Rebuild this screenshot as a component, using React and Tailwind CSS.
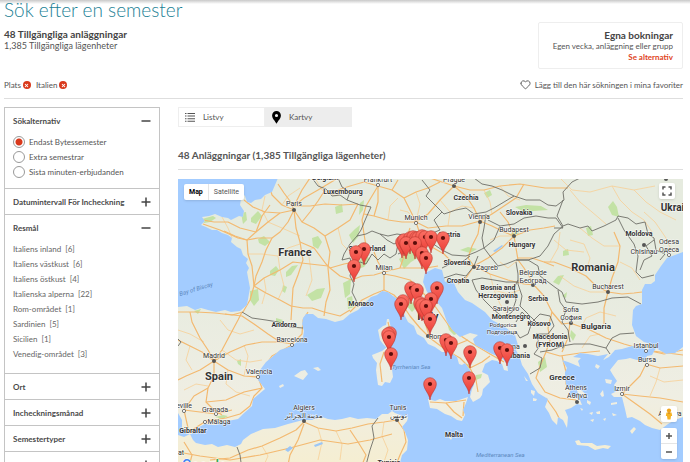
import React, { useState } from "react";
import { Heart, X } from "lucide-react";

const regions = [
  { name: "Italiens inland", count: 6 },
  { name: "Italiens västkust", count: 6 },
  { name: "Italiens östkust", count: 4 },
  { name: "Italienska alperna", count: 22 },
  { name: "Rom-området", count: 1 },
  { name: "Sardinien", count: 5 },
  { name: "Sicilien", count: 1 },
  { name: "Venedig-området", count: 3 },
];

const searchOptions = [
  "Endast Bytessemester",
  "Extra semestrar",
  "Sista minuten-erbjudanden",
];

const land = [
  // Europe
  "278,178 275,185 272,192 265,195 261,199 255,200 251,203 247,202 245,196 241,192 238,193 241,199 240,205 244,211 243,217 239,216 235,218 231,220 228,218 222,217 215,214 209,216 202,217 205,221 201,225 206,227 212,230 217,230 222,233 228,235 232,238 231,242 237,247 241,249 243,255 248,259 246,263 249,268 247,272 250,288 247,305 240,311 231,312 225,310 216,312 208,310 201,308 195,310 187,306 178,307 178,413 182,420 182,428 187,434 192,434 195,429 205,424 215,425 228,421 238,419 243,414 252,406 253,399 259,394 265,389 258,380 260,370 266,362 272,357 280,350 292,346 303,337 304,331 302,324 303,318 306,314 313,314 318,318 326,319 335,322 343,320 350,314 358,310 365,303 371,297 377,295 382,291 388,292 393,296 399,300 402,308 405,316 408,322 414,326 417,334 424,338 428,344 435,347 442,352 450,352 457,357 459,364 462,365 465,363 470,370 473,380 474,385 472,389 470,397 473,402 480,398 482,395 483,389 490,382 488,375 482,372 485,364 492,360 497,361 502,364 504,370 508,371 507,364 502,358 492,354 475,345 473,339 478,335 470,333 460,337 452,330 447,322 442,308 435,300 427,292 423,282 425,273 435,268 442,270 445,282 452,279 458,292 465,300 472,303 485,312 492,320 505,327 515,335 518,345 516,350 520,358 522,365 528,374 532,384 538,393 548,399 545,407 549,413 552,420 557,425 558,417 563,420 567,428 568,417 565,410 571,408 577,404 582,405 580,400 575,397 569,394 571,389 567,389 565,379 565,372 567,368 562,360 568,362 573,364 580,367 578,361 581,358 573,357 580,353 588,354 598,356 608,354 603,360 609,357 615,350 622,349 632,346 640,347 648,350 651,344 644,342 636,336 632,325 633,310 636,306 642,304 642,290 645,284 651,284 655,281 655,275 661,266 667,258 675,255 683,252 700,250 700,170 278,170",
  // Anatolia
  "656,348 666,354 675,353 683,347 700,345 700,416 683,417 675,420 668,424 660,430 652,428 645,425 640,421 632,417 627,418 625,409 622,397 614,397 611,394 619,390 614,385 617,381 613,375 610,370 618,360 626,359 630,358 637,360 645,360 647,356 652,355",
  // Africa
  "178,435 184,437 190,434 193,440 196,443 205,445 212,444 218,447 227,445 235,447 241,444 243,440 251,434 263,429 275,428 288,424 303,420 312,420 322,417 328,419 335,420 342,419 350,417 358,419 367,418 376,419 382,414 388,414 392,411 395,413 400,415 400,418 404,416 408,417 407,421 402,427 405,432 408,440 407,450 402,455 398,470 178,470",
  // Sardinia, Corsica, Sicily, Crete
  "382,351 387,347 390,349 394,354 394,362 392,369 393,377 390,383 385,382 382,386 378,385 377,378 376,370 377,363 373,358 372,355",
  "378,330 383,326 386,325 387,319 389,319 390,324 392,331 392,340 388,349 383,344 380,340",
  "428,399 435,401 440,399 445,401 456,401 468,397 466,403 463,410 465,415 462,421 457,420 451,416 445,414 437,409 430,408",
  "575,441 579,440 581,443 592,443 597,446 605,445 611,446 608,449 603,448 595,450 588,446 577,445",
  // smaller islands
  "294,376 301,371 305,370 308,374 303,380",
  "313,368 318,367 321,370 318,371",
  "279,386 283,384 284,386 280,388",
  "630,431 634,427 636,429 632,434",
  "448,436 452,438 451,440",
  "605,379 612,380 611,384 606,383",
  "600,394 603,390 604,396 602,397",
  "576,388 581,390 588,396 586,398 578,393",
  "531,390 535,391 534,396 531,393",
  "533,398 537,399 536,401 533,401",
  "524,376 528,381 526,381",
  "587,400 591,402 590,405 587,403",
  "596,412 600,411 600,414 597,414",
  "589,413 593,412 592,415",
  "580,408 583,409 582,411",
  "603,419 606,418 605,421",
  "611,403 617,402 617,404 611,405",
  "612,413 617,415 613,416",
  "590,420 594,419 593,422",
  "596,364 600,366 598,369 595,367",
];

const forests = [
  "202,219 213,216 216,218 210,222 204,223",
  "241,213 246,212 247,220 243,224",
  "251,218 258,211 262,216 256,224 251,222",
  "258,239 264,236 270,242 265,246 259,243",
  "270,271 276,266 279,270 275,276 270,275",
  "286,272 292,266 298,265 291,275 286,277",
  "312,238 318,236 322,242 318,249 313,246",
  "335,207 342,204 343,212 336,214",
  "250,291 258,289 259,300 254,306 250,300",
  "307,295 317,289 325,288 321,298 312,301",
  "343,283 351,279 350,294 345,298",
  "347,298 352,296 354,307 348,309",
  "283,285 287,287 285,293 282,291",
  "349,235 355,229 360,225 358,237 353,243",
  "360,203 364,200 363,210 359,215",
  "399,259 409,251 421,248 423,255 411,262 404,269",
  "358,262 365,255 370,259 364,267 358,269",
  "460,250 468,247 477,249 470,253",
  "608,207 613,201 617,207 619,217 612,215",
  "515,207 526,205 541,206 548,210 534,211 524,212",
  "586,228 591,226 593,235 588,236",
  "563,251 568,249 569,255 563,256",
  "553,282 558,276 564,275 559,285",
  "562,296 567,292 566,298",
  "538,362 545,357 547,367 540,372",
  "447,323 453,329 459,333 454,335 449,330",
  "462,365 470,364 471,370 465,371",
  "405,304 411,301 417,307 412,312",
  "237,361 241,359 241,366 238,364",
  "215,417 223,415 228,416 223,419",
  "194,311 201,309 198,314",
  "276,318 283,320 281,324 276,322",
  "484,193 490,190 492,195 487,198",
  "510,235 515,229 519,233 514,239",
  "571,330 576,335 573,341 570,336",
  "476,375 482,374 481,378 476,380",
];

const roads = [
  // France
  "278,184 284,193 290,201 294,210 302,222 314,228 325,236 330,252 328,268 330,290 326,302 324,316",
  "294,210 282,205 272,195 270,188",
  "294,210 280,213 265,212 253,207 244,200",
  "280,213 268,222 256,232 247,240 235,236 224,231",
  "203,220 214,222 228,222 240,228 256,232",
  "203,224 220,230 238,238 247,240",
  "294,210 288,222 280,232 272,238 258,238 247,240",
  "272,238 266,250 262,262 256,276 254,286",
  "294,210 296,228 300,242 303,260 298,275 293,288 292,304 291,320",
  "300,242 314,248 326,264 330,268 344,264 354,262",
  "254,286 264,278 280,270 293,262 310,264 328,266",
  "254,286 266,293 280,300 291,306 303,308 312,308 324,312 340,316 350,310",
  "254,286 250,300 243,312 232,315 215,313 196,312 178,312",
  "294,206 304,198 318,190 328,184 338,178",
  "294,206 310,206 325,204 342,205 358,204",
  "294,206 302,190 310,178",
  "247,240 248,254 252,266 254,286",
  "256,232 262,216 270,205",
  "302,222 310,212 318,201 325,190",
  "325,236 338,228 350,220 358,204",
  "330,268 340,276 352,280 362,276",
  // Spain
  "214,361 208,350 200,338 192,322 190,312",
  "214,361 222,350 230,335 238,320 242,312",
  "214,361 230,352 246,345 262,342 280,342 292,344",
  "280,342 268,334 254,324 242,316 225,314",
  "292,344 302,334 303,320 308,312",
  "214,361 228,370 244,376 258,377 262,370 272,356 290,346",
  "258,377 262,388 254,396 250,406 240,414 226,418 206,421 192,430",
  "214,361 214,376 208,388 206,402 214,410 222,415",
  "208,388 194,396 184,410 188,428",
  "214,361 200,370 186,376 178,380",
  "214,361 202,352 190,346 178,340",
  "206,402 226,400 244,392 262,388",
  "184,410 200,412 216,414 232,410",
  // Africa
  "184,442 192,455 188,470",
  "210,460 230,458 248,450 262,446 280,438 296,430 304,422 318,428 336,431 352,428 368,424 384,422 397,420",
  "178,452 200,456 230,460 260,455 290,448 320,440 348,444 370,440 392,434",
  "397,420 404,430 406,442 400,455 396,465",
  "350,430 358,442 366,455 362,465",
  "304,424 298,440 290,455 288,465",
  // Italy
  "350,312 362,300 374,294 384,290 394,295 402,304 410,316 420,328 430,338 446,350 460,358 470,368 476,380 478,392",
  "384,290 384,274 395,276 410,280 420,290 432,302 442,316 452,330 470,342 490,354 504,362",
  "362,276 374,275 384,272 400,268 414,268 426,268 438,266",
  "418,288 416,300 422,312 426,326 430,338",
  "402,304 412,296 420,290",
  "446,350 458,344 468,340",
  "470,368 482,362 490,356",
  "384,272 378,262 374,252",
  "400,268 404,256 406,240 410,228",
  "430,402 446,403 466,400",
  "464,402 463,416",
  "446,403 454,412 462,418",
  "384,352 380,364 382,382",
  "388,322 391,335 390,346",
  // Central Europe
  "378,186 372,196 366,206 362,220 364,234 366,246",
  "378,186 392,190 404,198 410,210 416,222",
  "378,186 364,182 350,186 338,190",
  "416,222 402,222 388,220 374,216 364,214",
  "416,222 428,214 440,200 454,186",
  "416,222 428,228 446,226 462,226 480,221",
  "416,222 420,234 430,246 444,254 452,262 474,266",
  "404,198 416,192 428,188 440,182",
  "454,186 466,196 474,208 480,221",
  "454,186 442,182 430,178",
  "454,186 460,178",
  "454,186 470,190 484,190 500,186 520,184 545,188 568,188",
  "480,221 492,214 504,206 516,198 524,184",
  "480,221 492,226 504,232 514,236",
  "480,221 478,234 472,246 468,258 474,266",
  "374,216 378,202 378,186",
  "392,190 398,180",
  "514,236 530,230 544,228 555,226",
  "514,236 516,248 518,260 524,268 530,278 534,285",
  "514,236 502,248 488,258 474,266",
  "514,236 508,222 500,212",
  "518,258 532,258 544,262 554,266",
  "474,266 490,274 508,280 524,284 534,285",
  "474,266 466,278 458,284",
  "534,285 544,296 552,312 562,324 570,323",
  "552,312 548,328 550,340 546,352 560,356 580,353 600,351",
  "570,323 590,330 606,338 624,344 645,350 660,352 683,355",
  "546,352 540,366 536,378 545,392 560,398 576,400",
  "546,398 556,412 560,420",
  "562,356 566,372 566,384 574,396",
  "570,323 568,338 562,352",
  "608,292 622,294 634,293 642,292",
  "608,292 596,286 586,276 570,268 554,262 544,262",
  "608,292 612,278 618,262 620,246 614,232",
  "608,292 604,308 604,324",
  "646,350 664,354 683,350",
  "646,364 640,376 630,386 622,394",
  "646,364 660,368 683,366",
  "622,394 636,404 650,414 662,424",
  "622,394 640,396 660,398 683,402",
];

const minorRoads = [
  "222,217 228,228 232,238",
  "265,196 262,210 268,222 282,228 300,236",
  "282,205 288,196 300,188",
  "315,178 322,190 336,196 345,190",
  "310,264 308,250 314,248",
  "280,270 278,256 288,248 300,244",
  "264,278 266,290 262,304",
  "280,270 284,286 278,300",
  "310,264 312,280 306,296",
  "338,228 342,244 350,252",
  "248,254 262,254 278,256",
  "178,330 190,334 204,342",
  "220,320 228,330 240,334 254,330",
  "222,350 236,360 250,362 262,360",
  "184,390 196,384 208,386",
  "228,370 226,384 236,392 250,396",
  "190,346 186,360 192,370",
  "244,345 248,356 244,376",
  "570,190 580,202 592,212 606,224",
  "560,178 572,190 590,192 612,186 634,190 655,186",
  "612,186 620,200 632,212 644,220 652,232",
  "634,190 646,202 660,212 676,220",
  "580,228 592,238 604,246 620,246",
  "570,240 584,244 590,258 586,272",
  "554,240 566,250 584,252",
  "620,262 632,268 640,280",
  "560,276 574,286 590,292 608,292",
  "644,212 655,222 666,238 672,252",
  "560,232 558,248 550,262",
  "450,212 462,206 474,208",
  "440,200 450,212 448,226",
  "400,210 408,212 416,222",
  "388,220 390,206 398,198",
  "416,192 420,204 416,222",
  "484,190 490,202 492,214",
  "500,186 508,196 520,200",
  "490,240 500,236 514,236",
  "500,262 508,268 518,260",
  "490,274 494,290 500,304 508,316",
  "494,290 508,294 520,290",
  "580,330 586,318 600,312 616,316",
  "582,348 590,336 600,334",
  "650,376 664,382 683,380",
  "650,396 656,382 660,368",
  "262,446 268,456 264,465",
  "318,428 322,442 318,460",
  "336,431 342,444 340,460",
  "384,422 382,436 388,450 384,462",
];

const borders = [
  "312,178 318,186 326,189 332,196 340,195 347,200 360,205 371,207 366,218 361,230 357,236",
  "338,178 342,187 350,192 347,200",
  "357,236 350,244 344,254 342,260 350,258 352,266 350,276 354,284 352,292 356,300 358,307",
  "357,236 366,234 372,231 380,234 387,240 394,244 402,240",
  "352,266 360,262 366,264 372,254 378,260 384,254 390,258 396,254 398,244",
  "380,234 388,236 397,234 410,236 420,232 430,234 440,230 434,220 442,212",
  "398,254 406,250 416,246 424,240 432,243 442,250 452,255 466,256 476,252 484,248",
  "422,180 430,190 426,196 438,208 444,214 456,210 466,208 474,214 486,212 494,208 504,202 514,196",
  "474,178 482,184 492,186 502,190 514,196 526,200 540,200 548,205 556,206 564,200 563,192 572,182 580,178",
  "486,214 484,228 482,238 484,248 494,240 500,226 488,220",
  "500,226 514,224 524,218 536,216 548,218 556,218 563,228 554,228",
  "563,200 557,216 563,226 568,224 580,228 588,226 592,231 604,226 616,220 618,216 628,218 636,224 645,222 648,234 654,238 656,250 665,254 660,260",
  "563,226 554,234 548,246 540,256 528,260 516,260",
  "484,248 490,256 498,266 506,264 516,260 528,260 538,266 540,276 548,282 556,288 562,292 566,302 582,304 598,302 612,298 628,297 641,304",
  "442,268 450,264 462,262 470,256",
  "444,278 456,274 466,276 474,266 478,256",
  "472,280 482,278 494,280 506,282 518,282",
  "472,280 476,290 484,300 494,310 504,318 512,312 516,300 514,288 518,280",
  "516,262 518,274 518,284 522,296 520,306 528,314 534,320 540,326",
  "558,290 560,302 566,310 562,322 568,330 570,342",
  "516,322 522,312 532,322 528,334 520,338 516,332",
  "532,322 540,314 550,316 554,326 548,334 536,334",
  "536,334 540,346 534,354 542,358 540,368 530,374",
  "540,352 552,350 562,346 574,344 590,344 606,348 612,338 620,334 634,333",
  "606,348 610,354",
  "618,218 624,230 634,244 638,256 636,272 642,278 654,275",
  "640,270 644,260 652,256 646,246 654,240",
  "242,312 252,318 266,320 278,322 290,327 303,328",
  "237,447 240,455 242,470",
  "378,418 372,426 374,438 370,450 366,465",
  "178,339 181,342 178,346",
];

// label: [text, x, baseline, size, weight]
const labels = [
  ["Frankfurt", 378, 182, 7, 400],
  ["Belgium", 325, 180, 7, 700],
  ["Luxembourg", 343, 194, 7, 700],
  ["Prague", 454, 182, 7, 400],
  ["Paris", 294, 206, 7, 400],
  ["Czechia", 466, 200, 7, 700],
  ["Slovakia", 519, 215, 7, 700],
  ["Munich", 416, 220, 7, 400],
  ["Vienna", 479, 219, 7, 400],
  ["Austria", 449, 237, 7, 700],
  ["Budapest", 514, 232, 7, 400],
  ["Hungary", 522, 247, 7, 700],
  ["Switzerland", 367, 251, 7, 700],
  ["France", 295, 256, 11, 700],
  ["Milan", 384, 270, 7, 400],
  ["Slovenia", 457, 265, 7, 700],
  ["Zagreb", 487, 270, 7, 400],
  ["Croatia", 458, 283, 7, 700],
  ["Ukraine", 678, 211, 10, 700],
  ["Moldova", 639, 236, 7, 700],
  ["Chisinau", 644, 254, 7, 400],
  ["Odesa", 669, 244, 7, 400],
  ["Одеса", 669, 252, 7, 400],
  ["Romania", 593, 271, 11, 700],
  ["Bucharest", 608, 289, 7, 400],
  ["Belgrade", 533, 275, 7, 400],
  ["Београд", 533, 283, 7, 400],
  ["Bosnia and", 498, 290, 7, 700],
  ["Herzegovina", 498, 298, 7, 700],
  ["Sarajevo", 506, 311, 7, 400],
  ["Serbia", 538, 301, 7, 700],
  ["Sofia", 571, 312, 7, 400],
  ["София", 571, 320, 7, 400],
  ["Montenegro", 511, 319, 7, 700],
  ["Podgorica", 503, 327, 6, 400],
  ["Подгорица", 502, 334, 6, 400],
  ["Kosovo", 539, 326, 7, 700],
  ["Bulgaria", 596, 329, 8, 700],
  ["Macedonia", 550, 339, 7, 700],
  ["(FYROM)", 550, 347, 7, 700],
  ["Tirana", 510, 349, 7, 400],
  ["Albania", 518, 358, 7, 700],
  ["Monaco", 361, 306, 7, 700],
  ["Italy", 428, 320, 11, 700],
  ["Rome", 438, 339, 7, 400],
  ["Andorra", 284, 327, 7, 700],
  ["Barcelona", 292, 342, 7, 400],
  ["Madrid", 214, 358, 7, 400],
  ["Valencia", 259, 374, 7, 400],
  ["Spain", 219, 380, 11, 700],
  ["Seville", 182, 408, 7, 400],
  ["Granada", 215, 412, 7, 400],
  ["Málaga", 219, 424, 7, 400],
  ["Gibraltar", 193, 433, 7, 700],
  ["Rabat", 175, 455, 7, 400],
  ["Algiers", 304, 410, 7, 400],
  ["مدينة الجزائر", 304, 418, 7, 400],
  ["Tunis", 398, 410, 7, 400],
  ["تونس", 398, 418, 7, 400],
  ["Tunisia", 389, 465, 7, 700],
  ["Malta", 454, 437, 7, 700],
  ["Greece", 562, 380, 8, 700],
  ["Athens", 576, 390, 7, 400],
  ["Αθήνα", 577, 398, 7, 400],
  ["Izmir", 622, 391, 7, 400],
  ["Istanbul", 646, 348, 7, 400],
  ["Bursa", 647, 362, 7, 400],
  ["Antalya", 670, 416, 7, 400],
];

const capitals = [
  [294, 210], [454, 186], [480, 222], [514, 236], [474, 267], [644, 245], [608, 292],
  [533, 285], [507, 302], [525, 346], [571, 323], [428, 336], [214, 361], [304, 421],
  [397, 420], [577, 402], [666, 179],
];

const cities = [
  [378, 185], [416, 223], [384, 273], [669, 255], [292, 345], [258, 377], [184, 411],
  [216, 414], [205, 422], [646, 351], [647, 365], [622, 394],
];

const pins = [
  [402, 242], [404, 240], [410, 238], [413, 237], [416, 238], [418, 238], [422, 236],
  [425, 237], [431, 237], [443, 238], [406, 243], [415, 243], [422, 253], [426, 258],
  [364, 249], [356, 252], [354, 266], [411, 288], [417, 290], [437, 288], [431, 299],
  [403, 301], [401, 304], [420, 303], [422, 305], [426, 306], [430, 319], [390, 333],
  [388, 334], [389, 337], [391, 354], [446, 340], [451, 343], [470, 352], [500, 348],
  [507, 350], [430, 384], [469, 378],
];

const MapCanvas = () => (
  <svg
    viewBox="178 179 505 283"
    preserveAspectRatio="xMidYMid slice"
    className="block w-full h-full bg-[#a3ccff]"
    fontFamily="Roboto, sans-serif"
    role="img"
    aria-label="Karta"
  >
    <defs>
      <clipPath id="land">
        {land.map((points) => (
          <polygon key={points} points={points} />
        ))}
      </clipPath>
      <linearGradient id="terrain" x1="0" y1="0" x2="0" y2="1">
        <stop offset="0.35" stopColor="#e6ebdf" />
        <stop offset="0.75" stopColor="#efeee3" />
        <stop offset="1" stopColor="#f6eed0" />
      </linearGradient>
      <linearGradient id="pin" x1="0" y1="0" x2="0" y2="1">
        <stop offset="0" stopColor="#fb7064" />
        <stop offset="1" stopColor="#ea3b35" />
      </linearGradient>
    </defs>

    <g clipPath="url(#land)">
      <rect x="170" y="170" width="540" height="300" fill="url(#terrain)" />
      <g fill="#c3e2a5">
        {forests.map((points) => (
          <polygon key={points} points={points} />
        ))}
      </g>
      <g fill="none" stroke="#f7cf95" strokeWidth="0.8" strokeLinejoin="round">
        {minorRoads.map((points) => (
          <polyline key={points} points={points} />
        ))}
      </g>
      <g fill="none" stroke="#f3b970" strokeWidth="1.2" strokeLinejoin="round">
        {roads.map((points) => (
          <polyline key={points} points={points} />
        ))}
      </g>
      <g fill="none" stroke="#6e6e68" strokeWidth="0.9" strokeLinejoin="round">
        {borders.map((points) => (
          <polyline key={points} points={points} />
        ))}
      </g>
      <g fill="#9cc7f7">
        <path d="M493 251l9-6 1 1-8 6z" />
        <path d="M355 257l7-2 1 1-7 3z" />
        <path d="M285 450l5-4 3 2-5 4zM314 445l8-3 1 2-8 3z" />
      </g>
    </g>

    <g fill="#5c88bd" fontSize="6" fontStyle="italic">
      <text x="180" y="296" transform="rotate(-17 180 296)">Bay of Biscay</text>
      <text x="392" y="369">Tyrrhenian Sea</text>
      <text x="476" y="457">Mediterranean Sea</text>
    </g>

    <g fill="#fff" stroke="#555" strokeWidth="0.8">
      {cities.map(([x, y]) => (
        <circle key={`${x}-${y}`} cx={x} cy={y} r="1.6" />
      ))}
    </g>
    <g fill="#555">
      {capitals.map(([x, y]) => (
        <circle key={`${x}-${y}`} cx={x} cy={y} r="2" />
      ))}
    </g>

    <g textAnchor="middle" fill="#333" stroke="#fff" strokeWidth="1.2" strokeOpacity="0.7" paintOrder="stroke">
      {labels.map(([text, x, y, size, weight]) => (
        <text key={text} x={x} y={y} fontSize={size} fontWeight={weight}>
          {text}
        </text>
      ))}
    </g>

    {pins.map(([x, y]) => (
      <g key={`${x}-${y}`} transform={`translate(${x} ${y})`}>
        <path
          d="M0 16C-0.6 9.500-6.300 5.500-6.300 0A6.300 6.300 0 0 1 6.300 0C6.300 5.500 0.600 9.500 0 16Z"
          fill="url(#pin)"
          stroke="#b8352d"
          strokeWidth="0.6"
        />
        <circle r="2.100" fill="#5a0d0a" />
      </g>
    ))}

    <text x="182" y="470" fontSize="14" fontWeight="500" stroke="#fff" strokeWidth="1" paintOrder="stroke">
      <tspan fill="#4285f4">G</tspan>
      <tspan fill="#ea4335">o</tspan>
      <tspan fill="#fbbc05">o</tspan>
      <tspan fill="#4285f4">g</tspan>
      <tspan fill="#34a853">l</tspan>
      <tspan fill="#ea4335">e</tspan>
    </text>
  </svg>
);

const FilterPanel = ({ title, open, children }) => (
  <section className="border-b border-[#c4c4c4]">
    <button
      type="button"
      aria-expanded={Boolean(open)}
      className="flex items-center justify-between w-full h-[25px] px-2 font-bold text-[#4a4a4a] text-left"
    >
      <span>{title}</span>
      <svg viewBox="0 0 10 10" className="w-[10px] h-[10px]" stroke="#444" strokeWidth="1.500">
        <path d={open ? "M0.500 5H9.500" : "M0.500 5H9.500M5 0.500V9.500"} />
      </svg>
    </button>
    {children}
  </section>
);

const Chip = ({ label }) => (
  <span className="flex items-center gap-[2px]">
    {label}
    <button
      type="button"
      aria-label={`Ta bort ${label}`}
      className="flex items-center justify-center w-2 h-2 rounded-full bg-[#d9391c] text-white"
    >
      <X size={5} strokeWidth={5} />
    </button>
  </span>
);

const App = () => {
  const [option, setOption] = useState(searchOptions[0]);

  return (
    <div className="flex flex-col h-screen overflow-hidden bg-white pl-1 pr-[7px] font-['Lato',sans-serif] text-[8px] leading-[10px] text-[#555] bg-[linear-gradient(#c9c9c9,#fff_4px)]">
      <header className="flex justify-between pb-2 border-b border-[#dedede]">
        <div>
          <h1 className="text-[19px] leading-5 text-[#1b7f95] font-light">Sök efter en semester</h1>
          <h2 className="mt-2 text-[10px] leading-3 font-bold text-[#444]">
            48 Tillgängliga anläggningar
          </h2>
          <p className="text-[9px] leading-3">1,385 Tillgängliga lägenheter</p>
          <div className="flex gap-[5px] mt-7">
            <Chip label="Plats" />
            <Chip label="Italien" />
          </div>
        </div>
        <div className="flex flex-col items-end pt-[22px]">
          <div className="flex flex-col items-end min-w-[145px] h-[47px] pt-[6px] px-[9px] border border-[#eee] rounded-xs">
            <h3 className="text-[10px] leading-3 font-bold text-[#444]">Egna bokningar</h3>
            <p>Egen vecka, anläggning eller grupp</p>
            <a href="#alternativ" className="mt-px font-bold text-[#e0441c]">
              Se alternativ
            </a>
          </div>
          <button type="button" className="flex items-center gap-1 mt-[10px] whitespace-nowrap">
            <Heart size={11} strokeWidth={2} />
            Lägg till den här sökningen i mina favoriter
          </button>
        </div>
      </header>

      <div className="flex flex-1 min-h-0 gap-[18px] pt-2">
        <aside className="w-[156px] shrink-0 overflow-hidden border border-b-0 border-[#c4c4c4]">
          <FilterPanel title="Sökalternativ" open>
            <div className="px-2 pt-px pb-[9px]">
              {searchOptions.map((name) => (
                <label key={name} className="flex items-center gap-1 h-[15px]">
                  <input
                    type="radio"
                    name="option"
                    checked={option === name}
                    onChange={() => setOption(name)}
                    className="appearance-none shrink-0 w-3 h-3 rounded-full border border-[#999] bg-white checked:bg-[radial-gradient(circle,#d9391c_3px,#fff_4px)]"
                  />
                  {name}
                </label>
              ))}
            </div>
          </FilterPanel>
          <FilterPanel title="Datumintervall För Incheckning" />
          <FilterPanel title="Resmål" open>
            <ul className="px-2 pt-px pb-3">
              {regions.map(({ name, count }) => (
                <li key={name} className="flex items-center h-[15px] text-[#666]">
                  <a href="#resmal" className="flex gap-1">
                    <span>{name}</span>
                    <span>[{count}]</span>
                  </a>
                </li>
              ))}
            </ul>
          </FilterPanel>
          <FilterPanel title="Ort" />
          <FilterPanel title="Incheckningsmånad" />
          <FilterPanel title="Semestertyper" />
          <FilterPanel title="Anläggning" />
        </aside>

        <main className="flex flex-col flex-1 min-w-0">
          <div className="flex shrink-0 h-5">
            <button type="button" className="flex items-center gap-2 w-[87px] pl-[6px] border border-[#eee]">
              <svg viewBox="0 0 10 9" className="w-[10px] h-[9px]" fill="#555">
                <path d="M0 0h1.500v1H0zM2.500 0H10v1H2.500zM0 2.600h1.500v1H0zM2.500 2.600H10v1H2.500zM0 5.200h1.500v1H0zM2.500 5.200H10v1H2.500zM0 7.800h1.500v1H0zM2.500 7.800H10v1H2.500z" />
              </svg>
              Listvy
            </button>
            <button type="button" className="flex items-center gap-2 w-[87px] pl-[7px] bg-[#ededed]">
              <svg viewBox="0 0 9 13" className="w-[9px] h-[13px]" fill="#000">
                <path
                  fillRule="evenodd"
                  d="M4.500 0A4.400 4.400 0 0 1 8.900 4.400C8.900 7.500 6 9.500 4.500 12.800C3 9.500 0.100 7.500 0.100 4.400A4.400 4.400 0 0 1 4.500 0ZM4.500 2.900A1.600 1.600 0 1 0 4.500 6.100A1.600 1.600 0 1 0 4.500 2.900Z"
                />
              </svg>
              Kartvy
            </button>
          </div>
          <h2 className="shrink-0 pt-[21px] pb-[7px] border-b border-[#dedede] text-[10px] leading-[14px] font-bold text-[#555]">
            48 Anläggningar (1,385 Tillgängliga lägenheter)
          </h2>
          <div className="relative flex-1 min-h-0 mt-[9px] font-['Roboto',sans-serif]">
            <MapCanvas />
            <div className="absolute top-[5px] left-[6px] flex h-4 rounded-xs bg-white text-[7px] shadow-sm">
              <button type="button" className="px-[5px] font-bold text-black border-r border-[#e5e5e5]">
                Map
              </button>
              <button type="button" className="px-[5px]">
                Satellite
              </button>
            </div>
            <button
              type="button"
              aria-label="Helskärm"
              className="absolute top-1 right-2 flex items-center justify-center w-4 h-4 rounded-xs bg-white shadow-sm"
            >
              <svg viewBox="0 0 10 10" className="w-[10px] h-[10px]" fill="none" stroke="#555" strokeWidth="1.500">
                <path d="M1 3.500V1H3.500M6.500 1H9V3.500M9 6.500V9H6.500M3.500 9H1V6.500" />
              </svg>
            </button>
            <div className="absolute bottom-[3px] right-[6px] flex flex-col gap-[6px]">
              <button
                type="button"
                aria-label="Street View"
                className="flex items-center justify-center w-4 h-4 rounded-xs bg-white shadow-sm"
              >
                <svg viewBox="0 0 8 12" className="w-2 h-3">
                  <path d="M1.500 4.500H6.500L7.200 8H6L5.500 11.500H2.500L2 8H0.800Z" fill="#f5b324" />
                  <circle cx="4" cy="2.500" r="2.100" fill="#f0a51a" />
                  <path d="M2.500 4.600H5.500L4 6Z" fill="#c97c10" />
                </svg>
              </button>
              <div className="flex flex-col w-4 rounded-xs bg-white shadow-sm">
                <button type="button" aria-label="Zooma in" className="flex items-center justify-center h-[15px]">
                  <svg viewBox="0 0 6 6" className="w-[6px] h-[6px]" stroke="#555" strokeWidth="1.500">
                    <path d="M0 3H6M3 0V6" />
                  </svg>
                </button>
                <button
                  type="button"
                  aria-label="Zooma ut"
                  className="flex items-center justify-center h-4 border-t border-[#e5e5e5]"
                >
                  <svg viewBox="0 0 6 6" className="w-[6px] h-[6px]" stroke="#555" strokeWidth="1.500">
                    <path d="M0 3H6" />
                  </svg>
                </button>
              </div>
            </div>
          </div>
        </main>
      </div>
    </div>
  );
};

export default App;
